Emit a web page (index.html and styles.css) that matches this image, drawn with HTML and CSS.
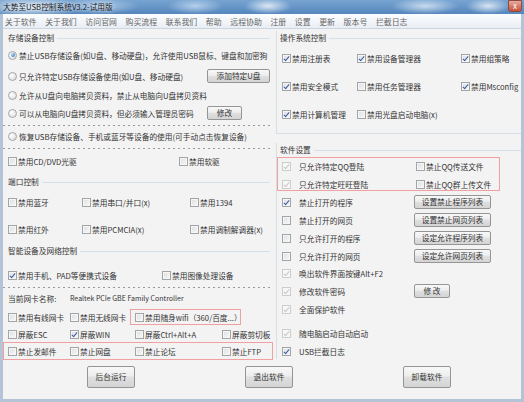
FILE: index.html
```html
<!DOCTYPE html>
<html lang="zh-CN">
<head>
  <meta charset="UTF-8" />
  <meta name="viewport" content="width=device-width, initial-scale=1" />
  <title>大势至USB控制系统V3.2-试用版</title>
  <link rel="stylesheet" href="styles.css">
</head>
<body>
  <div class="window">
    <div class="titlebar">
      <span class="title">大势至USB控制系统V3.2-试用版</span>
      <span class="close">x</span>
    </div>

    <div class="client">
      <div class="menubar">
        <span>关于软件</span>
        <span>关于我们</span>
        <span>访问官网</span>
        <span>购买流程</span>
        <span>联系我们</span>
        <span>帮助</span>
        <span>远程协助</span>
        <span>注册</span>
        <span>设置</span>
        <span>更新</span>
        <span>版本号</span>
        <span>拦截日志</span>
      </div>

      <div class="main">
        <div class="left">
          <div class="sec h17">存储设备控制</div>
          <div class="row h21">
            <label class="opt"><span class="rb on"></span>禁止USB存储设备(如U盘、移动硬盘)，允许使用USB鼠标、键盘和加密狗</label>
          </div>
          <div class="row grid with-btn h19">
            <label class="opt"><span class="rb"></span>只允许特定USB存储设备使用(如U盘、移动硬盘)</label>
            <button class="btn add">添加特定U盘</button>
          </div>
          <div class="row h18">
            <label class="opt"><span class="rb"></span>允许从U盘向电脑拷贝资料，禁止从电脑向U盘拷贝资料</label>
          </div>
          <div class="row grid with-btn h19">
            <label class="opt"><span class="rb"></span>可以从电脑向U盘拷贝资料，但必须输入管理员密码</label>
            <button class="btn mod">修改</button>
          </div>
          <div class="dash h4"></div>
          <div class="row h19">
            <label class="opt"><span class="rb"></span>恢复USB存储设备、手机或蓝牙等设备的使用(可手动点击恢复设备)</label>
          </div>
          <div class="dash h6"></div>
          <div class="row grid cd h21">
            <label class="opt"><span class="cb"></span>禁用CD/DVD光驱</label>
            <label class="opt"><span class="cb"></span>禁用软驱</label>
          </div>

          <div class="sec h20">端口控制</div>
          <div class="row grid port h27">
            <label class="opt"><span class="cb"></span>禁用蓝牙</label>
            <label class="opt"><span class="cb"></span>禁用串口/并口(x)</label>
            <label class="opt"><span class="cb"></span>禁用1394</label>
          </div>
          <div class="row grid port h22">
            <label class="opt"><span class="cb"></span>禁用红外</label>
            <label class="opt"><span class="cb"></span>禁用PCMCIA(x)</label>
            <label class="opt"><span class="cb"></span>禁用调制解调器(x)</label>
          </div>

          <div class="sec h24">智能设备及网络控制</div>
          <div class="row grid phone h19">
            <label class="opt"><span class="cb on"></span>禁用手机、PAD等便携式设备</label>
            <label class="opt"><span class="cb"></span>禁用图像处理设备</label>
          </div>
          <div class="dash h4"></div>
          <div class="row grid nic h18">
            <span class="opt">当前网卡名称:</span>
            <span class="opt nic-name">Realtek PCIe GBE Family Controller</span>
          </div>
          <div class="row grid net1 h18">
            <label class="opt"><span class="cb"></span>禁用有线网卡</label>
            <label class="opt"><span class="cb"></span>禁用无线网卡</label>
            <div class="redbox wifi">
              <label class="opt"><span class="cb"></span>禁用随身wifi（360/百度...）</label>
            </div>
          </div>
          <div class="row grid net h15">
            <label class="opt"><span class="cb"></span>屏蔽ESC</label>
            <label class="opt"><span class="cb on"></span>屏蔽WIN</label>
            <label class="opt"><span class="cb"></span>屏蔽Ctrl+Alt+A</label>
            <label class="opt"><span class="cb"></span>屏蔽剪切板</label>
          </div>
          <div class="redbox forbid">
            <label class="opt"><span class="cb"></span>禁止发邮件</label>
            <label class="opt"><span class="cb"></span>禁止网盘</label>
            <label class="opt"><span class="cb"></span>禁止论坛</label>
            <label class="opt"><span class="cb"></span>禁止FTP</label>
          </div>
        </div>

        <div class="right">
          <div class="group sys">
            <div class="gtitle">操作系统控制</div>
            <div class="row grid three h28">
              <label class="opt"><span class="cb on"></span>禁用注册表</label>
              <label class="opt"><span class="cb on"></span>禁用设备管理器</label>
              <label class="opt"><span class="cb on"></span>禁用组策略</label>
            </div>
            <div class="row grid three h28">
              <label class="opt"><span class="cb on"></span>禁用安全模式</label>
              <label class="opt"><span class="cb"></span>禁用任务管理器</label>
              <label class="opt"><span class="cb on"></span>禁用Msconfig</label>
            </div>
            <div class="row grid three h26">
              <label class="opt"><span class="cb on"></span>禁用计算机管理</label>
              <label class="opt"><span class="cb"></span>禁用光盘启动电脑(x)</label>
            </div>
          </div>

          <div class="group soft">
            <div class="gtitle">软件设置</div>
            <div class="redbox qq">
              <div class="row grid h18">
                <label class="opt wide"><span class="cb on dis"></span>只允许特定QQ登陆</label>
                <label class="opt"><span class="cb"></span>禁止QQ传送文件</label>
              </div>
              <div class="row grid h13">
                <label class="opt wide"><span class="cb on dis"></span>只允许特定旺旺登陆</label>
                <label class="opt"><span class="cb"></span>禁止QQ群上传文件</label>
              </div>
            </div>
            <div class="row grid set h18">
              <label class="opt wide"><span class="cb on"></span>禁止打开的程序</label>
              <button class="btn list">设置禁止程序列表</button>
            </div>
            <div class="row grid set h18">
              <label class="opt wide"><span class="cb"></span>禁止打开的网页</label>
              <button class="btn list">设置禁止网页列表</button>
            </div>
            <div class="row grid set h18">
              <label class="opt wide"><span class="cb"></span>只允许打开的程序</label>
              <button class="btn list">设定允许程序列表</button>
            </div>
            <div class="row grid set h17">
              <label class="opt wide"><span class="cb"></span>只允许打开的网页</label>
              <button class="btn list">设定允许网页列表</button>
            </div>
            <div class="row h18">
              <label class="opt wide"><span class="cb on dis"></span>唤出软件界面按键Alt+F2</label>
            </div>
            <div class="row grid set h18">
              <label class="opt wide"><span class="cb on dis"></span>修改软件密码</label>
              <button class="btn mod2">修 改</button>
            </div>
            <div class="row h24">
              <label class="opt wide"><span class="cb on dis"></span>全面保护软件</label>
            </div>
            <div class="row h18">
              <label class="opt wide"><span class="cb on dis"></span>随电脑启动自动启动</label>
            </div>
            <div class="row h15">
              <label class="opt wide"><span class="cb on"></span>USB拦截日志</label>
            </div>
          </div>
        </div>
      </div>

      <div class="footer">
        <button class="btn big">后台运行</button>
        <button class="btn big">退出软件</button>
        <button class="btn big">卸载软件</button>
      </div>
    </div>
  </div>
</body>
</html>
```

FILE: styles.css
```css
* {
  box-sizing: border-box;
}

body {
  margin: 0;
  font-family: "Noto Sans CJK SC", "Liberation Sans", sans-serif;
  font-size: 7.7px;
  color: #333;
}

.window {
  width: 524px;
  height: 402px;
  display: flex;
  flex-direction: column;
  background: #b3c4d6;
}

/* aero title bar */
.titlebar {
  height: 14px;
  flex: none;
  display: flex;
  align-items: center;
  justify-content: space-between;
  padding: 0 2px 0 3px;
  background:
    radial-gradient(ellipse 50px 10px at 30px 7px, rgba(235, 243, 250, 0.9), transparent),
    radial-gradient(ellipse 40px 8px at 100px 6px, rgba(215, 232, 248, 0.65), transparent),
    radial-gradient(ellipse 28px 8px at 195px 6px, rgba(205, 226, 246, 0.75), transparent),
    radial-gradient(ellipse 24px 8px at 268px 6px, rgba(240, 246, 252, 0.85), transparent),
    radial-gradient(ellipse 34px 8px at 425px 6px, rgba(225, 236, 248, 0.8), transparent),
    radial-gradient(ellipse 22px 8px at 488px 6px, rgba(235, 242, 250, 0.85), transparent),
    linear-gradient(#78a4d1, #5586bd);
}

.title {
  line-height: 14px;
  color: #1a1a1a;
  text-shadow: 0 0 4px rgba(255, 255, 255, 0.95);
}

.close {
  width: 14px;
  height: 12px;
  margin-top: -2px;
  border: 1px solid #8a4a42;
  border-radius: 0 0 3px 3px;
  background: linear-gradient(#e9a99d, #c9503b);
  color: #fff;
  font-size: 8px;
  line-height: 10px;
  text-align: center;
}

.client {
  flex: 1;
  margin: 0 3px 3px;
  display: flex;
  flex-direction: column;
  background: #f3f3f3;
}

.menubar {
  height: 15px;
  flex: none;
  display: flex;
  align-items: center;
  gap: 8.6px;
  padding-left: 2px;
  background: linear-gradient(#fcfdfe, #e9eef4);
  border-bottom: 1px solid #ccd6e2;
  color: #666;
  font-size: 7.9px;
}

.main {
  height: 333px;
  flex: none;
  display: flex;
}

.left {
  width: 273px;
  flex: none;
  padding-top: 2px;
}

.right {
  flex: 1;
}

/* section headers with a rule after the text */
.sec {
  display: flex;
  gap: 3px;
  line-height: 14px;
  padding: 0 6px 0 5px;
}

.sec::after,
.gtitle::after {
  content: "";
  flex: 1;
  height: 1px;
  margin-top: 7px;
  background: #d6dee6;
}

.dash {
  background: repeating-linear-gradient(90deg, #999 0 2px, transparent 2px 5px) top left / 267px 1px no-repeat;
}

.row {
  display: flex;
  align-items: flex-start;
  padding-left: 5px;
}

.grid {
  display: grid;
  align-items: start;
}

.opt {
  display: flex;
  align-items: center;
  gap: 1px;
  height: 14px;
  white-space: nowrap;
}

.nic-name {
  font-size: 7px;
}

.h4 { height: 4px; }
.h6 { height: 6px; }
.h13 { height: 13px; }
.h15 { height: 15px; }
.h17 { height: 17px; }
.h18 { height: 18px; }
.h19 { height: 19px; }
.h20 { height: 20px; }
.h21 { height: 21px; }
.h22 { height: 22px; }
.h24 { height: 24px; }
.h26 { height: 26px; }
.h27 { height: 27px; }
.h28 { height: 28px; }

.with-btn { grid-template-columns: 199px auto; }
.cd { grid-template-columns: 171px auto; }
.port { grid-template-columns: 74px 108px auto; }
.phone { grid-template-columns: 154px auto; }
.nic { grid-template-columns: 62px auto; }
.net { grid-template-columns: 62px 65px 87px auto; }

.net1 {
  grid-template-columns: 62px 60px 111px;
  grid-template-rows: 16px;
  align-items: center;
}

.redbox {
  border: 1px solid #f0a0a0;
}

.wifi {
  height: 16px;
  padding-left: 4px;
  display: flex;
  align-items: center;
}

.forbid {
  width: 270px;
  height: 18px;
  padding-left: 4px;
  display: grid;
  grid-template-columns: 62px 65px 87px auto;
  align-items: center;
}

/* right side group boxes */
.group {
  border-left: 1px solid #d6dee6;
}

.sys {
  margin-top: 9px;
  border-bottom: 1px solid #d6dee6;
}

.soft {
  margin-top: 16px;
}

.gtitle {
  display: flex;
  gap: 3px;
  height: 14px;
  line-height: 14px;
  margin-top: -7px;
  padding-left: 3px;
}

.sys .gtitle {
  margin-bottom: 6px;
}

.three { grid-template-columns: 75px 104px auto; }

.qq {
  width: 223px;
  padding: 1px 0 0 4px;
  margin-bottom: 4px;
}

.qq .row {
  padding-left: 0;
  grid-template-columns: 134px auto;
}

.set { grid-template-columns: 132px auto; }

.opt.wide {
  gap: 8px;
}

/* checkboxes and radios, win7 look */
.cb,
.rb {
  position: relative;
  flex: none;
  width: 9px;
  height: 9px;
  border: 1px solid #a2a5a8;
}

.cb {
  background: linear-gradient(135deg, #dcdee0, #f8f8f8);
  box-shadow: inset 0 0 0 1px #f6f6f6;
}

.cb.on::after {
  content: "";
  position: absolute;
  left: 2px;
  top: 0;
  width: 2px;
  height: 5px;
  border: solid #3a5ca3;
  border-width: 0 1.5px 1.5px 0;
  transform: rotate(40deg);
}

.cb.dis {
  border-color: #cdcdcd;
  background: #f7f7f7;
  box-shadow: none;
}

.cb.dis::after {
  border-color: #c6c6c6;
}

.rb {
  margin-right: 1px;
  border-radius: 50%;
  background: radial-gradient(circle at 35% 35%, #fff, #d8d8d8);
}

.rb.on::after {
  content: "";
  position: absolute;
  left: 1.5px;
  top: 1.5px;
  width: 4px;
  height: 4px;
  border-radius: 50%;
  background: radial-gradient(circle at 35% 35%, #a9d8f8, #2a66ad);
}

.btn {
  font: inherit;
  color: #333;
  height: 14px;
  padding: 0;
  border: 1px solid #959595;
  border-radius: 2px;
  background: linear-gradient(#f8f8f8, #ededed 45%, #e0e0e0 50%, #d4d4d4);
  line-height: 12px;
}

.add { width: 63px; }
.mod { width: 35px; }
.mod2 { width: 36px; }
.list { width: 77px; }

.big {
  width: 48px;
  height: 22px;
}

.footer {
  flex: 1;
  display: flex;
  gap: 110px;
  padding: 4px 0 0 84px;
}
```
